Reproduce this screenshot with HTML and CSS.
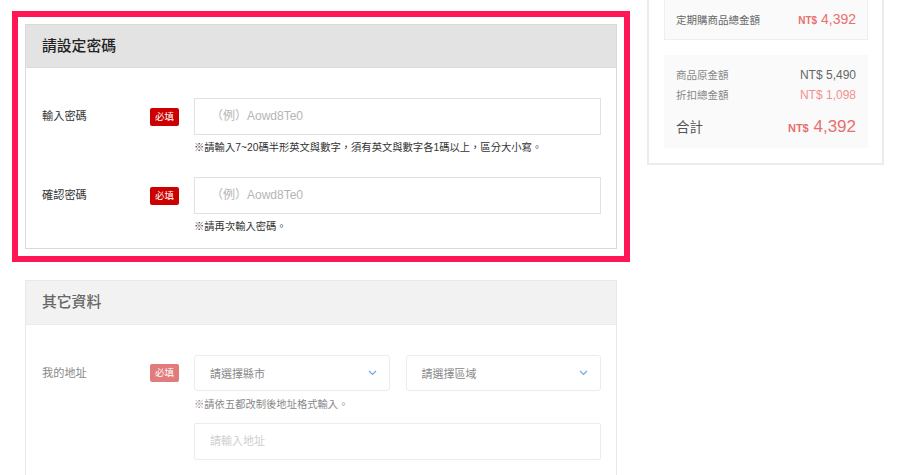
FILE: index.html
```html
<!DOCTYPE html>
<html lang="zh-Hant">
<head>
<meta charset="utf-8">
<link rel="stylesheet" href="styles.css">
</head>
<body>
<div class="page">
  <main class="main">
    <div class="highlight">
      <section class="card">
        <header class="card-head">請設定密碼</header>
        <div class="card-body">
          <div class="row">
            <div class="label">輸入密碼</div>
            <div class="badge-cell"><span class="badge">必填</span></div>
            <div class="field">
              <div class="input pw"><span class="ph">（例）Aowd8Te0</span></div>
              <div class="hint">※請輸入7~20碼半形英文與數字，須有英文與數字各1碼以上，區分大小寫。</div>
            </div>
          </div>
          <div class="row">
            <div class="label">確認密碼</div>
            <div class="badge-cell"><span class="badge">必填</span></div>
            <div class="field">
              <div class="input pw"><span class="ph">（例）Aowd8Te0</span></div>
              <div class="hint">※請再次輸入密碼。</div>
            </div>
          </div>
        </div>
      </section>
    </div>

    <section class="card card-muted">
      <header class="card-head">其它資料</header>
      <div class="card-body body-muted">
        <div class="row">
          <div class="label">我的地址</div>
          <div class="badge-cell"><span class="badge">必填</span></div>
          <div class="field">
            <div class="selects">
              <div class="select"><span>請選擇縣市</span><svg class="chev" width="9" height="6" viewBox="0 0 9 6"><path d="M1 1l3.5 3.5L8 1" fill="none" stroke="#6ea8e8" stroke-width="1.2"/></svg></div>
              <div class="select"><span>請選擇區域</span><svg class="chev" width="9" height="6" viewBox="0 0 9 6"><path d="M1 1l3.5 3.5L8 1" fill="none" stroke="#6ea8e8" stroke-width="1.2"/></svg></div>
            </div>
            <div class="hint">※請依五都改制後地址格式輸入。</div>
            <div class="input addr"><span class="ph">請輸入地址</span></div>
          </div>
        </div>
      </div>
    </section>
  </main>

  <aside class="side">
    <div class="summary">
      <div class="box box-top">
        <div class="line"><span class="k">定期購商品總金額</span><span class="v red"><b class="cur">NT$</b> 4,392</span></div>
      </div>
      <div class="box box-total">
        <div class="line"><span class="k light">商品原金額</span><span class="v gray">NT$ 5,490</span></div>
        <div class="line"><span class="k light">折扣總金額</span><span class="v pink">NT$ 1,098</span></div>
        <div class="line total"><span class="k">合計</span><span class="v red big"><b class="cur">NT$</b> 4,392</span></div>
      </div>
    </div>
  </aside>
</div>
</body>
</html>
```

FILE: styles.css
```css
* { box-sizing: border-box; }
html, body { margin: 0; padding: 0; background: #fff; }
body {
  font-family: "Liberation Sans", "Noto Sans CJK TC", sans-serif;
  color: #333;
  overflow: hidden;
}
.page {
  display: flex;
  align-items: flex-start;
  gap: 17px;
  padding-left: 12px;
}
.main { width: 618px; padding-top: 11px; }

.highlight {
  border: 6px solid #ff1654;
  padding: 7px;
}

.card {
  border: 1px solid #d9d9d9;
  background: #fff;
}
.card-head {
  height: 43px;
  background: #e3e3e3;
  border-bottom: 1px solid #dadada;
  padding-left: 16px;
  font-size: 14.8px;
  font-weight: 500;
  line-height: 42px;
  color: #222;
}
.card-body {
  padding: 30px 15px 13px 16px;
}
.row {
  display: grid;
  grid-template-columns: 108px 44px 1fr;
  margin-bottom: 21px;
}
.row:last-child { margin-bottom: 0; }
.label {
  height: 37px;
  line-height: 37px;
  font-size: 11.2px;
  color: #333;
}
.badge-cell {
  height: 37px;
  display: flex;
  align-items: center;
}
.badge {
  display: inline-block;
  width: 29px;
  height: 18px;
  line-height: 18px;
  text-align: center;
  background: #cc0000;
  color: #fff;
  font-size: 9.5px;
  border-radius: 2px;
}
.input {
  height: 37px;
  border: 1px solid #e2e2e2;
  padding-left: 15px;
  line-height: 35px;
  font-size: 11px;
}
.input.pw { font-size: 12px; padding-left: 16px; }
.ph { color: #b5b5b5; }
.hint {
  margin-top: 5px;
  line-height: 16px;
  font-size: 10.3px;
  color: #333;
}

.card-muted {
  margin: 18px 0 0 13px;
  width: 592px;
  border-color: #e8e8e8;
}
.card-muted .card-head {
  height: 44px;
  line-height: 43px;
  background: #f2f2f2;
  border-bottom: 1px solid #ececec;
  color: #666;
}
.body-muted { padding-top: 30px; padding-bottom: 20px; }
.card-muted .label { height: 36px; line-height: 36px; color: #888; }
.card-muted .badge-cell { height: 36px; }
.card-muted .badge { background: #e27b7b; }
.card-muted .hint { color: #888; margin-top: 6px; }
.selects {
  display: flex;
  gap: 16px;
}
.select {
  flex: 1;
  height: 36px;
  border: 1px solid #ececec;
  border-radius: 3px;
  padding: 0 12px 0 15px;
  display: flex;
  align-items: center;
  justify-content: space-between;
  font-size: 11px;
  color: #888;
}
.addr {
  margin-top: 10px;
  border-color: #ececec;
  border-radius: 2px;
}
.addr .ph { color: #cfcfcf; }

.side { width: 237px; margin-top: -40px; }
.summary {
  border: 2px solid #ececec;
  border-top-width: 1px;
  padding: 15px 14px 15px 15px;
}
.box {
  background: #fafafa;
  padding: 0 12px;
}
.box-top {
  height: 64px;
  border: 1px solid #eeeeee;
  display: flex;
  align-items: flex-end;
  padding-bottom: 8px;
  padding-left: 11px;
  padding-right: 11px;
}
.box-top .line { flex: 1; }
.box-total {
  margin-top: 15px;
  padding-top: 10px;
  padding-bottom: 8px;
}
.line {
  display: flex;
  justify-content: space-between;
  align-items: baseline;
  line-height: 20px;
}
.k { font-size: 10.5px; color: #666; }
.k.light { color: #888; }
.v { font-size: 12px; }
.red { color: #e86f6f; font-size: 14px; }
.gray { color: #666; }
.pink { color: #f29090; }
.cur { font-size: 10px; font-weight: bold; }
.total { margin-top: 10px; line-height: 24px; }
.total .k { font-size: 13.5px; color: #555; }
.big { font-size: 17px; }
.big .cur { font-size: 11px; }
```
